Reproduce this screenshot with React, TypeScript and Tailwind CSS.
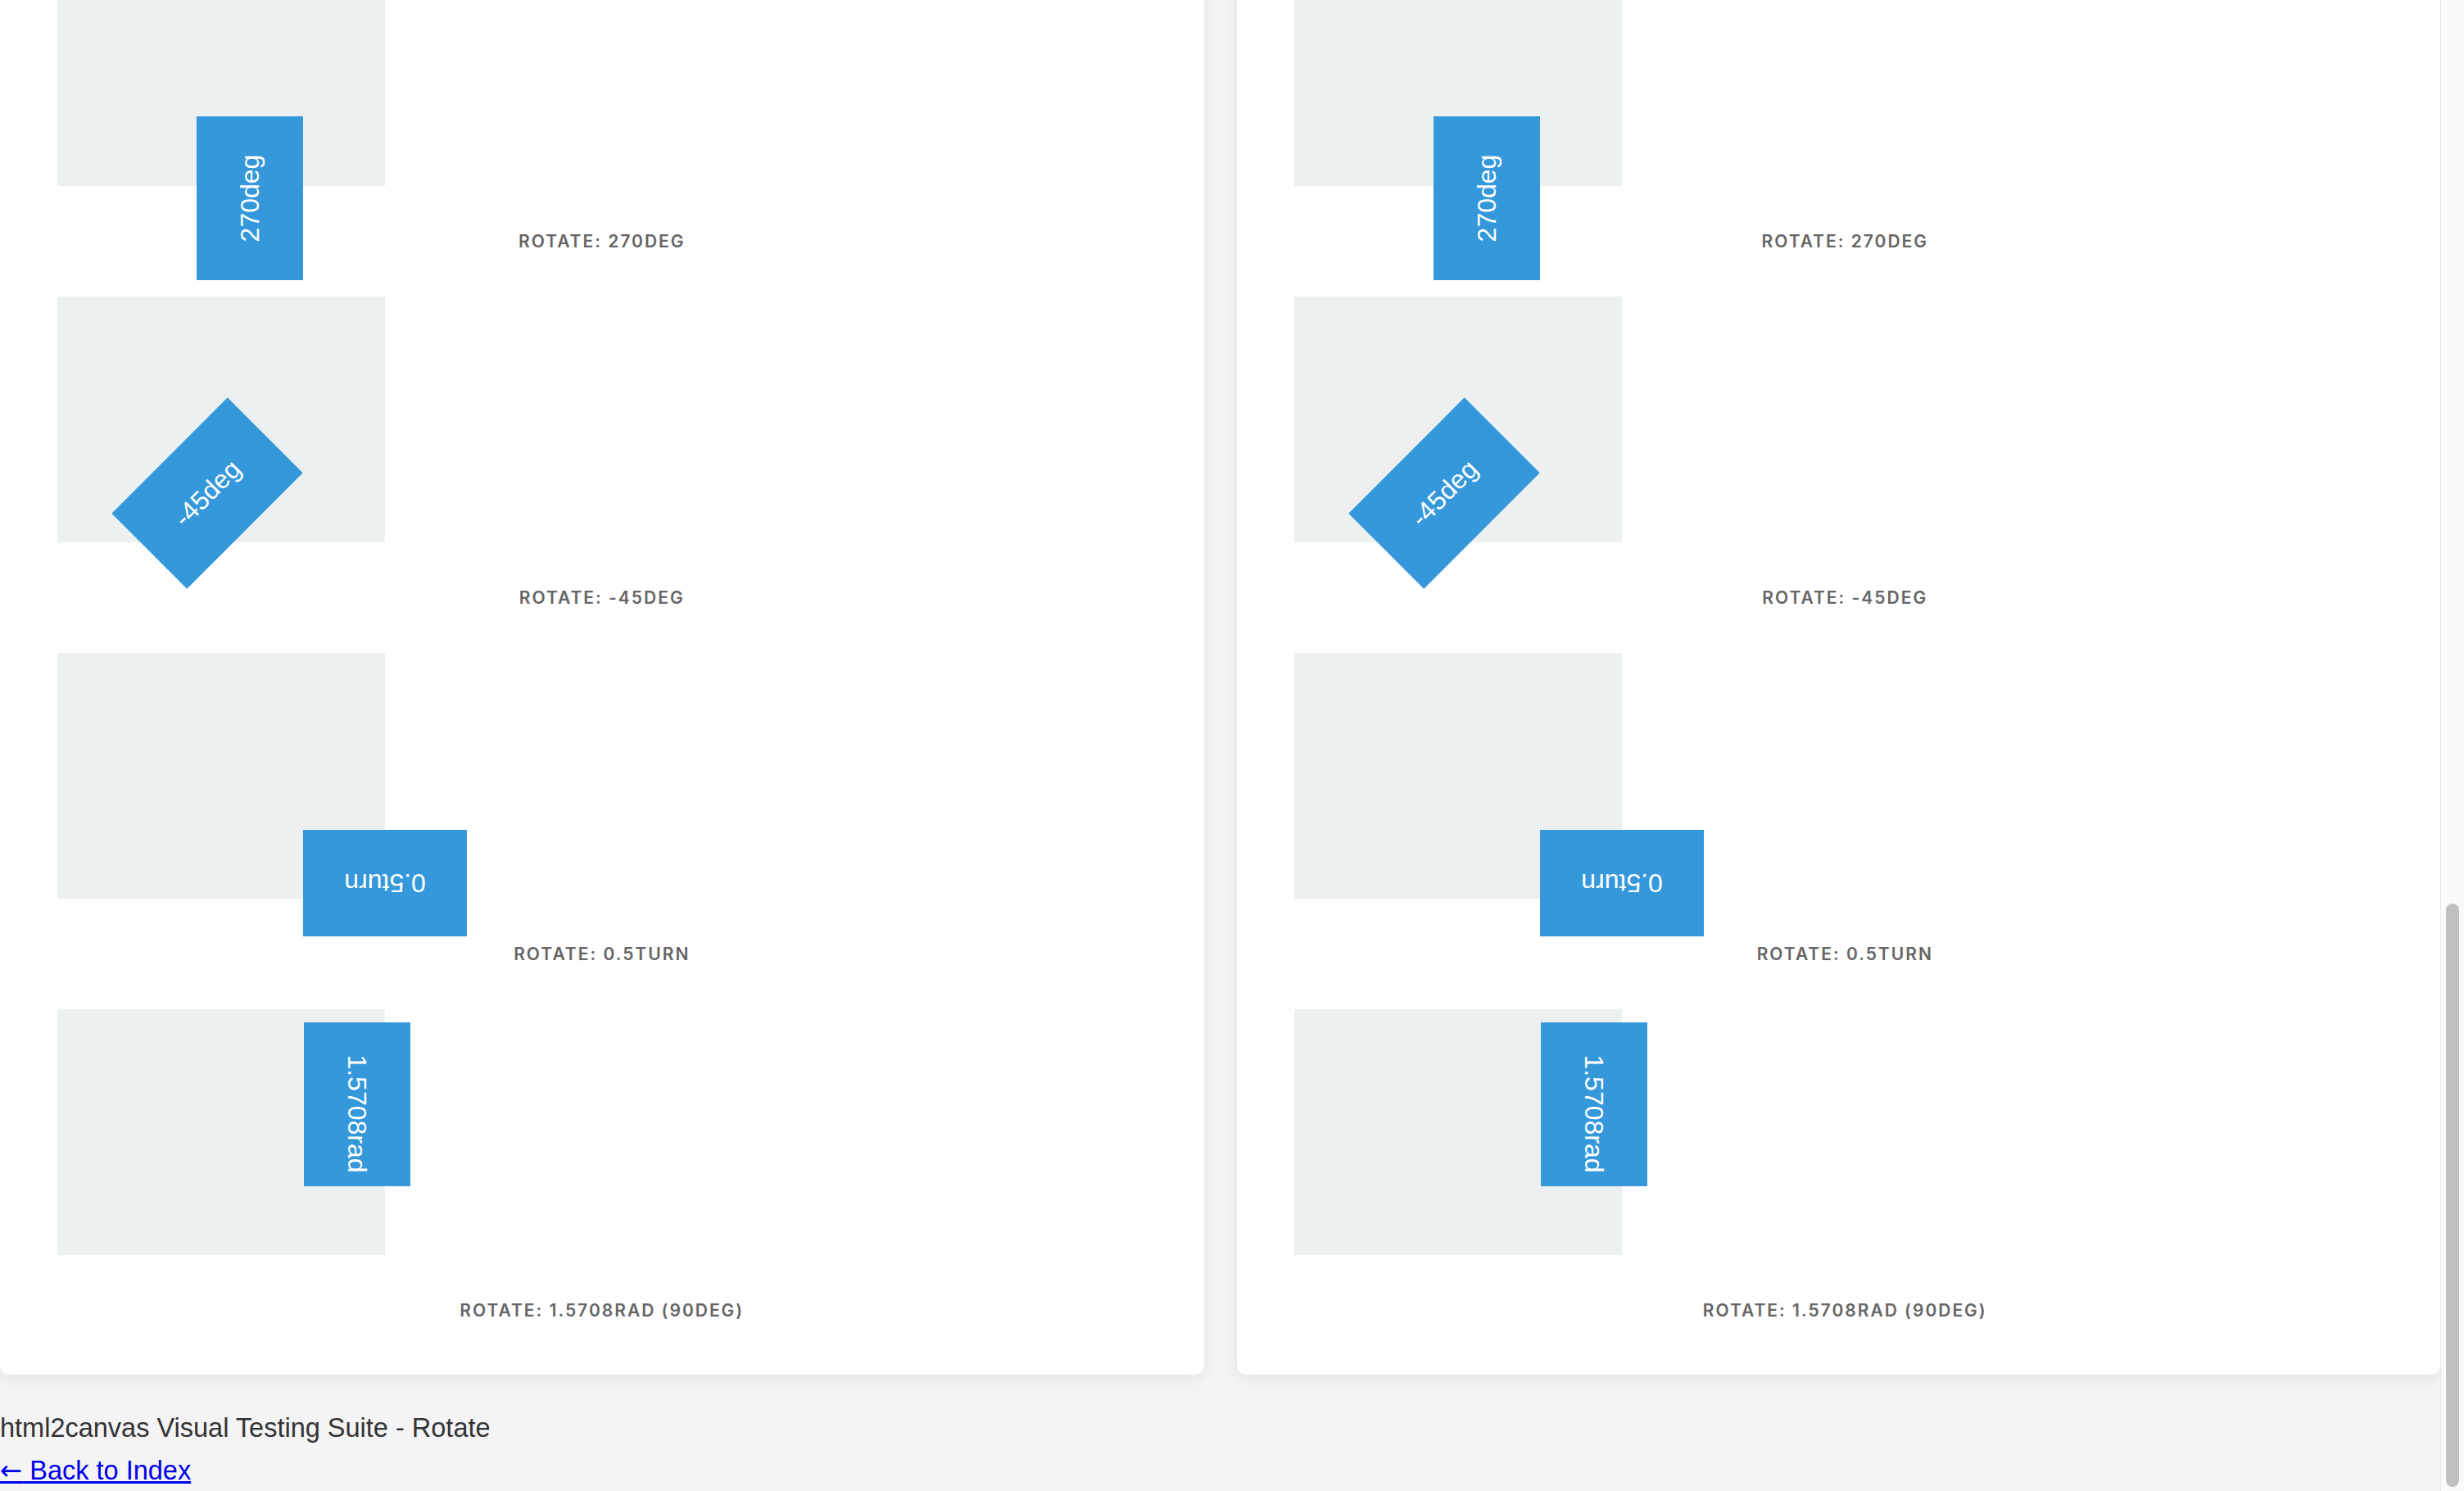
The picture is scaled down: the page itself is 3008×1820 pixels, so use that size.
const TESTS = [
  {
    label: 'Rotate: 270deg',
    text: '270deg',
    box: 'left-[135px] top-[250px] rotate-[270deg]',
  },
  {
    label: 'Rotate: -45deg',
    text: '-45deg',
    box: 'left-[83px] top-[175px] rotate-[-45deg]',
  },
  {
    label: 'Rotate: 0.5turn',
    text: '0.5turn',
    box: 'left-[300px] top-[216px] rotate-[0.5turn]',
  },
  {
    label: 'Rotate: 1.5708rad (90deg)',
    text: '1.5708rad',
    box: 'left-[266px] top-[51px] rotate-[1.5708rad] pl-[23px]',
  },
]

function TestCard({ labelShift = '' }: { labelShift?: string }) {
  return (
    <div className="rounded-xl bg-white px-[70px] pb-[11px] shadow-[0_4px_20px_rgba(0,0,0,0.08)]">
      {TESTS.map((t) => (
        <div key={t.label}>
          <div className="relative h-[300px] w-[400px] bg-[#ecf0f1]">
            <div
              className={`absolute flex h-[130px] w-[200px] items-center justify-center bg-[#3498db] text-[32px] text-white ${t.box}`}
            >
              {t.text}
            </div>
          </div>
          <p
            className={`mb-[52px] mt-[53px] text-center font-['Inter',sans-serif] text-[21px] font-semibold uppercase leading-[30px] tracking-[2px] text-[#666] ${labelShift}`}
          >
            {t.label}
          </p>
        </div>
      ))}
    </div>
  )
}

export default function App() {
  return (
    <div className="flex h-[1820px] overflow-hidden bg-[#f4f4f4] font-['Liberation_Sans',Arial,sans-serif]">
      <div className="min-w-0 flex-1">
        {/* page is scrolled: first row starts above the viewport */}
        <div className="-mt-[73px] grid grid-cols-2 gap-[40px]">
          <TestCard />
          <TestCard labelShift="pl-[16px]" />
        </div>
        <footer className="mt-[39px] leading-[52px] text-[#333]">
          <div className="text-[32.5px]">html2canvas Visual Testing Suite - Rotate</div>
          <a href="#" className="text-[32.5px] text-[#0000ee] underline">
            <span className="font-['DejaVu_Sans',sans-serif]">←</span> Back to Index
          </a>
        </footer>
      </div>

      {/* scrollbar */}
      <div className="w-[29px] border-l border-[#e6e6e6] bg-[#fafafa] px-[6px]">
        <div className="mt-[1103px] h-[712px] rounded-full bg-[#c1c1c1]" />
      </div>
    </div>
  )
}
